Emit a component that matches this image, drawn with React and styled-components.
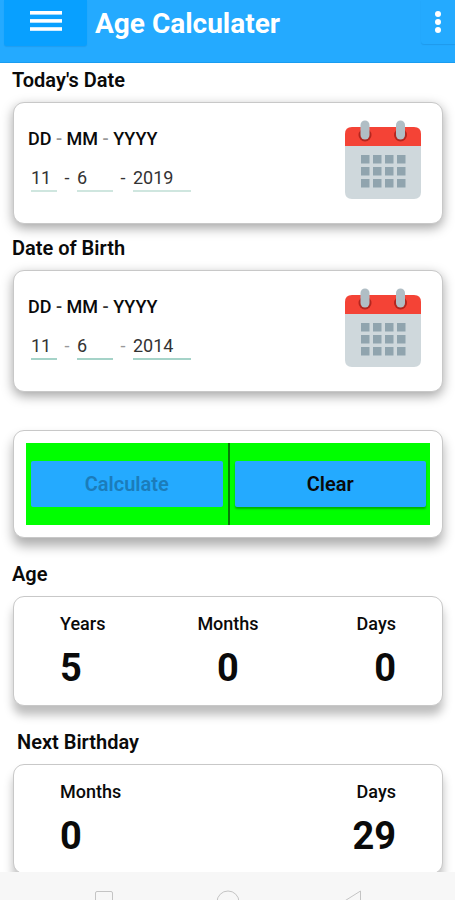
import React, { useState } from "react";
import styled, { createGlobalStyle } from "styled-components";

const TODAY = { day: "11", month: "6", year: "2019" };
const BIRTH = { day: "11", month: "6", year: "2014" };

export default function App() {
  const [today, setToday] = useState(TODAY);
  const [birth, setBirth] = useState(BIRTH);

  const clearHandler = () => {
    setToday({ day: "", month: "", year: "" });
    setBirth({ day: "", month: "", year: "" });
  };

  return (
    <>
      <GlobalStyle />
      <Screen>
        <Header>
          <MenuButton type="button" aria-label="Menu">
            <svg width="32" height="20" viewBox="0 0 32 20" fill="#ffffff">
              <rect y="0" width="32" height="3.6" />
              <rect y="8.1" width="32" height="3.6" />
              <rect y="16.2" width="32" height="3.6" />
            </svg>
          </MenuButton>
          <h1>Age Calculater</h1>
          <MoreButton type="button" aria-label="More options">
            <svg width="6" height="22" viewBox="0 0 6 22" fill="#ffffff">
              <circle cx="3" cy="3" r="3" />
              <circle cx="3" cy="11" r="3" />
              <circle cx="3" cy="19" r="3" />
            </svg>
          </MoreButton>
        </Header>

        <Main>
          <Heading>Today's Date</Heading>
          <DateCard name="today" date={today} onChange={setToday} light />

          <Heading $gap={12}>Date of Birth</Heading>
          <DateCard name="birth" date={birth} onChange={setBirth} />

          <ActionCard>
            <Actions>
              <ActionCell>
                <ActionButton type="button" disabled>
                  Calculate
                </ActionButton>
              </ActionCell>
              <ActionCell>
                <ActionButton type="button" onClick={clearHandler}>
                  Clear
                </ActionButton>
              </ActionCell>
            </Actions>
          </ActionCard>

          <Heading $gap={24}>Age</Heading>
          <ResultCard>
            <Stat label="Years" value="5" />
            <Stat label="Months" value="0" align="center" />
            <Stat label="Days" value="0" align="right" />
          </ResultCard>

          <Heading $gap={24} $indent>
            Next Birthday
          </Heading>
          <ResultCard>
            <Stat label="Months" value="0" />
            <Stat label="Days" value="29" align="right" />
          </ResultCard>
        </Main>

        <SystemBar>
          <svg width="20" height="20" viewBox="0 0 20 20">
            <rect x="1.5" y="1.5" width="17" height="17" rx="1.5" />
          </svg>
          <svg width="24" height="24" viewBox="0 0 24 24">
            <circle cx="12" cy="12" r="11" />
          </svg>
          <svg width="20" height="24" viewBox="0 0 20 24">
            <path d="M18.5 1 V23 L1 12 Z" />
          </svg>
        </SystemBar>
      </Screen>
    </>
  );
}

function DateCard({ name, date, onChange, light }) {
  const update = (field) => (e) =>
    onChange({ ...date, [field]: e.target.value });

  return (
    <DateBox>
      <div>
        <Format>
          DD <Dash $faded={light}>-</Dash> MM <Dash $faded={light}>-</Dash> YYYY
        </Format>
        <Fields>
          <DateInput
            aria-label={`${name} day`}
            value={date.day}
            onChange={update("day")}
            $width={26}
            $light={light}
          />
          <Dash $faded={!light}>-</Dash>
          <DateInput
            aria-label={`${name} month`}
            value={date.month}
            onChange={update("month")}
            $width={36}
            $light={light}
          />
          <Dash $faded={!light}>-</Dash>
          <DateInput
            aria-label={`${name} year`}
            value={date.year}
            onChange={update("year")}
            $width={58}
            $light={light}
          />
        </Fields>
      </div>
      <CalendarButton type="button" aria-label={`Pick ${name} date`}>
        <CalendarIcon />
      </CalendarButton>
    </DateBox>
  );
}

function Stat({ label, value, align = "left" }) {
  return (
    <StatBox $align={align}>
      <dt>{label}</dt>
      <dd>{value}</dd>
    </StatBox>
  );
}

function CalendarIcon() {
  return (
    <svg width="76" height="80" viewBox="0 0 76 80">
      <path d="M0 26 H76 V72 Q76 79 69 79 H7 Q0 79 0 72 Z" fill="#cfd8dc" />
      <path d="M0 26 V14 Q0 7 7 7 H69 Q76 7 76 14 V26 Z" fill="#f44336" />
      <circle cx="20" cy="15" r="6.5" fill="#b3261e" />
      <circle cx="55.500" cy="15" r="6.5" fill="#b3261e" />
      <rect x="15.5" y="0.5" width="9" height="19" rx="4.5" fill="#b0bec5" />
      <rect x="51" y="0.5" width="9" height="19" rx="4.5" fill="#b0bec5" />
      {[35, 47, 59].map((y) =>
        [16, 28, 40, 52].map((x) => (
          <rect key={`${x}-${y}`} x={x} y={y} width="8.5" height="8.5" fill="#90a4ae" />
        ))
      )}
    </svg>
  );
}

const GlobalStyle = createGlobalStyle`
  * {
    box-sizing: border-box;
  }
  body {
    margin: 0;
    font-family: Roboto, "Liberation Sans", sans-serif;
    color: #0a0a0a;
    background: #ffffff;
  }
  h1, h2, p, dl, dt, dd {
    margin: 0;
  }
  button, input {
    font-family: inherit;
    border: none;
    padding: 0;
  }
  button {
    cursor: pointer;
  }
  svg {
    display: block;
  }
`;

const Screen = styled.div`
  height: 100vh;
  display: flex;
  flex-direction: column;
  overflow: hidden;
`;

const Header = styled.header`
  flex: none;
  display: flex;
  align-items: flex-start;
  height: 63px;
  padding-left: 4px;
  background: #24aaff;
  border-bottom: 1px solid #1a9cf0;
  h1 {
    flex: 1;
    padding-left: 8px;
    font-size: 28px;
    line-height: 48px;
    font-weight: 700;
    color: #ffffff;
  }
`;

const MenuButton = styled.button`
  display: flex;
  justify-content: center;
  align-items: center;
  width: 83px;
  height: 46px;
  padding-bottom: 4px;
  border-radius: 0 0 3px 3px;
  background: #08a0ff;
  box-shadow: 0 1px 1px rgba(0, 60, 120, 0.12);
`;

const MoreButton = styled.button`
  display: flex;
  justify-content: center;
  align-items: center;
  width: 34px;
  height: 44px;
  border-radius: 0 0 0 3px;
  background: #24aaff;
  box-shadow: 0 1px 1px rgba(0, 60, 120, 0.15);
`;

const Main = styled.main`
  flex: 1;
  min-height: 0;
  overflow: hidden;
  padding: 5px 12px 0 13px;
`;

const Heading = styled.h2`
  margin: ${({ $gap }) => $gap || 0}px 0 10px
    ${({ $indent }) => ($indent ? "4px" : "-1px")};
  font-size: 20px;
  line-height: 24px;
  font-weight: 600;
`;

const Card = styled.section`
  border: 1px solid #c8c8c8;
  border-radius: 11px;
  background: #ffffff;
`;

const DateBox = styled(Card)`
  display: flex;
  justify-content: space-between;
  height: 122px;
  padding: 17px 21px 0 14px;
  box-shadow: 0 4px 12px rgba(0, 0, 0, 0.36);
`;

const Format = styled.p`
  margin-top: 7px;
  font-size: 18px;
  line-height: 24px;
  font-weight: 500;
`;

const Fields = styled.div`
  display: flex;
  align-items: center;
  margin-top: 13px;
  padding-left: 3px;
  font-size: 18px;
  > span {
    width: 20px;
    padding-bottom: 2px;
    text-align: center;
  }
`;

const Dash = styled.span`
  color: ${({ $faded }) => ($faded ? "#999999" : "#333333")};
`;

const DateInput = styled.input`
  width: ${({ $width }) => $width}px;
  height: 28px;
  border-bottom: 2px solid ${({ $light }) => ($light ? "#cfe6df" : "#a5d3c8")};
  border-radius: 0;
  outline: none;
  font-size: 18px;
  color: #333333;
  background: transparent;
`;

const CalendarButton = styled.button`
  align-self: flex-start;
  background: none;
`;

const ActionCard = styled(Card)`
  margin-top: 38px;
  padding: 12px;
  box-shadow: 0 8px 12px rgba(0, 0, 0, 0.32);
`;

const Actions = styled.div`
  display: flex;
  background: #00ff00;
`;

const ActionCell = styled.div`
  flex: 1;
  padding: 18px 5px;
  & + & {
    padding: 18px 4px 18px 5px;
    border-left: 2px solid #087a08;
  }
`;

const ActionButton = styled.button`
  display: block;
  width: 100%;
  height: 46px;
  border-radius: 2px;
  font-size: 20px;
  font-weight: 600;
  color: #0a0a0a;
  background: #24aaff;
  box-shadow: 0 2px 2px rgba(0, 0, 0, 0.3);
  &:disabled {
    color: #1b7cba;
    box-shadow: none;
    cursor: default;
  }
`;

const ResultCard = styled(Card).attrs({ as: "dl" })`
  display: flex;
  height: 110px;
  padding: 15px 46px 0;
  box-shadow: 0 9px 10px rgba(0, 0, 0, 0.26);
`;

const StatBox = styled.div`
  flex: 1;
  text-align: ${({ $align }) => $align};
  dt {
    font-size: 18px;
    line-height: 24px;
    font-weight: 500;
  }
  dd {
    margin-top: 10px;
    font-size: 38px;
    line-height: 44px;
    font-weight: 700;
  }
`;

const SystemBar = styled.footer`
  flex: none;
  display: flex;
  justify-content: space-between;
  align-items: flex-start;
  height: 28px;
  padding: 18px 93px 0 94px;
  overflow: hidden;
  background: #f7f7f7;
  svg {
    flex: none;
    fill: none;
    stroke: #c4c4c4;
    stroke-width: 1;
  }
`;
